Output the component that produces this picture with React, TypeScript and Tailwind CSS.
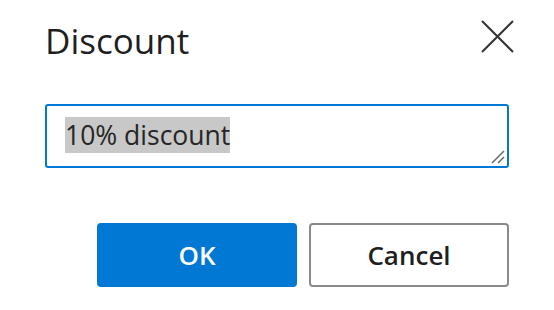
import React from "react";

const FONT = { fontFamily: '"Open Sans", "Noto Sans", sans-serif' };

function CloseIcon() {
  return (
    <svg width="34" height="34" viewBox="0 0 34 34" className="text-[#333]">
      <path d="M2 2L33 33M33 2L2 33" stroke="currentColor" strokeWidth="2" fill="none" />
    </svg>
  );
}

function ResizeGrip() {
  return (
    <svg width="14" height="14" viewBox="0 0 14 14" className="absolute bottom-[2px] right-[2px] text-[#6b6b6b]">
      <path d="M1 13L13 1M7 13L13 7" stroke="currentColor" strokeWidth="1.5" fill="none" />
    </svg>
  );
}

export default function App() {
  return (
    <div style={FONT} className="flex h-[310px] w-[554px] flex-col bg-white px-[45px] text-[#1f1f1f]">
      <div className="flex h-[104px] items-start justify-between">
        <h1 className="mt-[17px] text-[35px] leading-[47px] font-medium">Discount</h1>
        <button className="-mr-[5px] mt-[19px] flex h-[34px] w-[34px] items-center justify-center">
          <CloseIcon />
        </button>
      </div>

      <div className="relative h-[64px] w-full rounded-[3px] border-2 border-[#0078d4] pl-[18px] pt-[11px]">
        <span className="bg-[#c8c8c8] text-[26.5px] leading-[36px] text-[#262626]">10% discount</span>
        <ResizeGrip />
      </div>

      <div className="mt-[55px] flex justify-end gap-3">
        <button className="flex h-[64px] w-[200px] items-center justify-center rounded-[4px] bg-[#0078d4] text-[26px] font-semibold text-white">
          OK
        </button>
        <button className="flex h-[64px] w-[200px] items-center justify-center rounded-[4px] border-2 border-[#8a8a8a] bg-white text-[26px] font-semibold text-[#1f1f1f]">
          Cancel
        </button>
      </div>
    </div>
  );
}
